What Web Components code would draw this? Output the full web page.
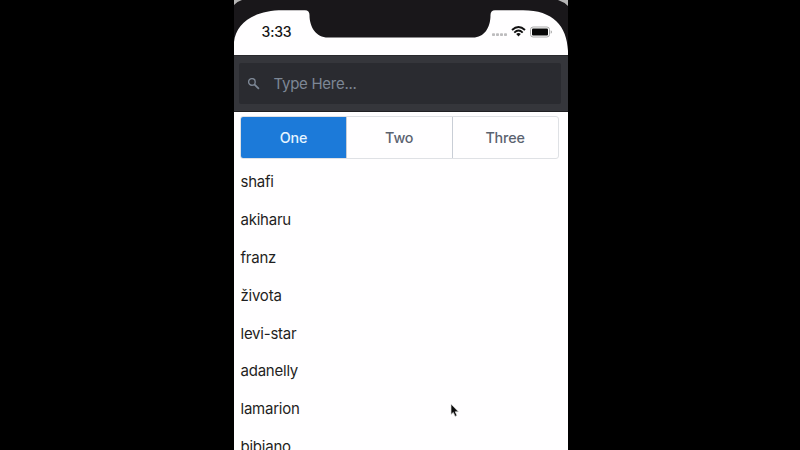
<!DOCTYPE html>
<html lang="en"><head><meta charset="utf-8"><title>Search</title>
<style>
html,body{margin:0;height:100%;background:#000;overflow:hidden}
body{display:flex;justify-content:center;font-family:Inter,"Liberation Sans",sans-serif}
</style></head><body>
<phone-screen>
  <status-bar slot="status">3:33</status-bar>
  <search-bar>Type Here...</search-bar>
  <segment-group>
    <segment-button active>One</segment-button>
    <segment-button>Two</segment-button>
    <segment-button>Three</segment-button>
  </segment-group>
  <name-list>
    <name-row>shafi</name-row>
    <name-row>akiharu</name-row>
    <name-row>franz</name-row>
    <name-row>života</name-row>
    <name-row>levi-star</name-row>
    <name-row>adanelly</name-row>
    <name-row>lamarion</name-row>
    <name-row>bibiano</name-row>
  </name-list>
  <mouse-pointer slot="overlay"></mouse-pointer>
</phone-screen>
<script>
function define(name, html) {
  const t = document.createElement('template');
  t.innerHTML = html;
  customElements.define(name, class extends HTMLElement {
    constructor() {
      super();
      this.attachShadow({mode: 'open'}).append(t.content.cloneNode(true));
    }
  });
}
define('phone-screen', `<style>
:host{display:flex;flex-direction:column;position:relative;width:334px;height:450px;margin-left:1px;background:#fffeff;overflow:hidden}
</style><slot name="status"></slot><slot></slot><slot name="overlay"></slot>`);
define('status-bar', `<style>
:host{display:flex;align-items:center;position:relative;height:55px;flex:none;background:#fffeff;box-sizing:border-box;padding:9px 16px 0 28px;justify-content:space-between;font-weight:500;font-size:14px;color:#151515;letter-spacing:-.15px}
.bezel{position:absolute;left:0;top:0}
.time{position:relative;margin-top:-2px}
.icons{position:relative;display:block}
</style>
<svg class="bezel" width="334" height="55" viewBox="0 0 334 55">
<path fill="#b5b5b5" d="M0 0h10L0 6zM323 0h11v7z"/>
<path fill="#19171a" d="M0 5Q3 1.500 8 0H324Q330 2 334 6V51C333 26 319 10.300 289 10.300H261Q256.500 10.300 256.500 15C256.500 28 250 37.500 239 37.500H94C82 37.500 75.500 27 75.500 15Q75.500 10.300 71 10.300H49C20 10.300 2 23 0 42Z"/></svg>
<span class="time"><slot></slot></span>
<svg class="icons" width="60" height="14" viewBox="0 0 60 14">
<g fill="#bdbcbe"><rect x="0" y="8.300" width="3" height="2.700" rx=".8"/><rect x="4" y="8.300" width="3" height="2.700" rx=".8"/><rect x="8" y="8.300" width="3" height="2.700" rx=".8"/><rect x="12" y="8.300" width="3" height="2.700" rx=".8"/></g>
<g fill="none" stroke="#111" stroke-width="1.900"><path d="M20 5Q26.500-1.200 33 5"/><path d="M22.300 7.600Q26.500 3.600 30.700 7.600"/></g>
<path fill="#111" d="M24.200 9Q26.500 7.200 28.800 9L26.500 11.400z"/>
<rect x="38.500" y="2" width="19" height="10" rx="2.600" fill="#fff" stroke="#aaa"/><rect x="40" y="3.600" width="16" height="6.900" rx="1" fill="#080808"/><path fill="#aaa" d="M58.700 5.200q1.300.5 1.300 1.800t-1.300 1.800z"/>
</svg>`);
define('search-bar', `<style>
:host{display:flex;box-sizing:border-box;height:57px;flex:none;background:#35363b;border-top:1px solid #29292d;border-bottom:1px solid #1f1f22;padding:7px 7px 7px 5px}
.field{flex:1;display:flex;align-items:center;gap:14px;padding-left:9px;border-radius:2px;background:#2a2b30;color:#7d8795;font-size:15px;letter-spacing:-.27px}
svg{display:block;flex:none}
</style><div class="field"><svg width="12" height="12" viewBox="0 0 12 12" fill="none" stroke="#7d8795" stroke-width="1.400"><circle cx="3.900" cy="3.900" r="3.300"/><path d="M6.400 6.400l4.500 4.500" stroke-width="1.700"/></svg><span><slot></slot></span></div>`);
define('segment-group', `<style>
:host{display:flex;box-sizing:border-box;flex:none;height:43px;margin:4px 9px 0 6.500px;border:1px solid #dfe1e5;border-radius:3px;overflow:hidden}
::slotted(:not(:first-child)){border-left:1px solid #c9ced6}
</style><slot></slot>`);
define('segment-button', `<style>
:host{display:flex;flex:1 1 0;box-sizing:border-box;align-items:center;justify-content:center;color:#5b6370;font-size:14.300px;font-weight:500;letter-spacing:-.15px}
:host([active]){background:#1c7ad9;color:#e5f4ff}
</style><slot></slot>`);
define('name-list', `<style>
:host{display:flex;flex-direction:column;padding:4px 7px 0}
</style><slot></slot>`);
define('name-row', `<style>
:host{display:flex;align-items:center;flex:none;height:37.800px;font-size:15px;letter-spacing:-.23px;color:#1f1f22}
</style><slot></slot>`);
define('mouse-pointer', `<style>
:host{position:absolute;left:216px;top:403px}svg{display:block}
</style><svg width="10" height="15" viewBox="0 0 10 15"><path d="M1 1v10.500l2.300-2.100 1.800 4 1.900-.9-1.800-3.700H8.500z" fill="#0b0b0b" stroke="#e2e2e2" stroke-width=".7"/></svg>`);
</script></body></html>
